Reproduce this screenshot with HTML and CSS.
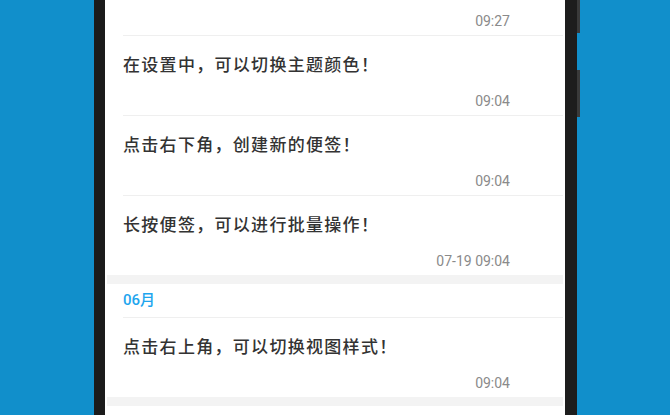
FILE: index.html
```html
<!DOCTYPE html>
<html lang="zh-CN">
<head>
    <meta charset="UTF-8">
    <meta name="viewport" content="width=device-width, initial-scale=1.0">
    <title>便签</title>
    <link rel="stylesheet" href="styles.css">
</head>
<body>

<div class="phone">
    <div class="side-key key-top"></div>
    <div class="side-key key-bottom"></div>

    <div class="screen">
        <div class="note-list">
            <div class="note">
                <div class="note-inner">
                    <div class="note-title"></div>
                    <div class="note-time">09:27</div>
                </div>
            </div>
            <div class="note">
                <div class="note-inner">
                    <div class="note-title">在设置中，可以切换主题颜色！</div>
                    <div class="note-time">09:04</div>
                </div>
            </div>
            <div class="note">
                <div class="note-inner">
                    <div class="note-title">点击右下角，创建新的便签！</div>
                    <div class="note-time">09:04</div>
                </div>
            </div>
            <div class="note last">
                <div class="note-inner">
                    <div class="note-title">长按便签，可以进行批量操作！</div>
                    <div class="note-time">07-19 09:04</div>
                </div>
            </div>

            <div class="group-gap"></div>

            <div class="month-header">
                <div class="month-inner">06月</div>
            </div>
            <div class="note last">
                <div class="note-inner">
                    <div class="note-title">点击右上角，可以切换视图样式！</div>
                    <div class="note-time">09:04</div>
                </div>
            </div>

            <div class="group-gap"></div>
        </div>
    </div>
</div>

</body>
</html>
```

FILE: styles.css
```css
html, body {
    margin: 0;
    padding: 0;
}
body {
    width: 670px;
    height: 415px;
    overflow: hidden;
    background-color: #118fcb;
    font-family: "Noto Sans CJK SC", "Noto Sans", sans-serif;
}
.phone {
    position: relative;
    width: 460px;
    height: 415px;
    margin-left: 94px;
    border-left: 11px solid #1b1b1b;
    border-right: 12px solid #1d1d1d;
}
/* volume / power keys on the right edge */
.side-key {
    position: absolute;
    right: -15px;
    width: 3px;
    background-color: #3a3a3a;
}
.key-top {
    top: 0;
    height: 33px;
}
.key-bottom {
    top: 70px;
    height: 47px;
}
.screen {
    height: 100%;
    overflow: hidden;
    background-color: #fff;
    padding: 0 2px;
}
.note-list {
    margin-top: -44px; /* list is scrolled a bit */
}
.note {
    padding-left: 16px;
    background-color: #fff;
}
.note-inner {
    height: 80px;
    box-sizing: border-box;
    padding: 16px 53px 0 0;
    border-bottom: 1px solid #efefef;
}
.note.last .note-inner {
    height: 79px;
    border-bottom: none;
}
.note-title {
    height: 24px;
    font-size: 17px;
    font-weight: 500;
    line-height: 24px;
    letter-spacing: 1.3px;
    color: #333;
}
.note-time {
    margin-top: 16px;
    font-family: Roboto, "Liberation Sans", sans-serif;
    font-size: 14px;
    line-height: 18px;
    color: #8a8a8a;
    text-align: right;
}
.group-gap {
    height: 9px;
    background-color: #f3f3f3;
}
.month-header {
    padding-left: 16px;
}
.month-inner {
    height: 33px;
    border-bottom: 1px solid #efefef;
    font-family: Roboto, "Noto Sans CJK SC", sans-serif;
    font-size: 15px;
    font-weight: 500;
    line-height: 33px;
    color: #1ea5ee;
}
```
